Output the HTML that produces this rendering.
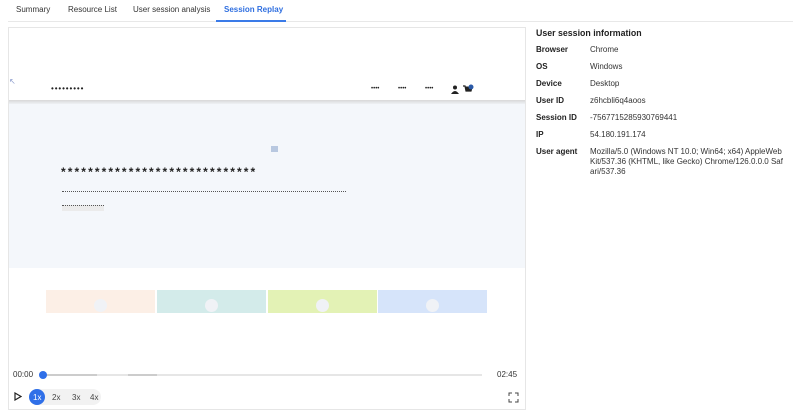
<!DOCTYPE html>
<html><head><style>
*{margin:0;padding:0;box-sizing:border-box}
body{width:800px;height:416px;background:#fff;font-family:"Liberation Sans",sans-serif;position:relative;overflow:hidden;color:#222}
.a{position:absolute}
.tab{position:absolute;top:5px;font-size:8px;color:#333}
.dot{font-size:8px;letter-spacing:0;color:#222}
.lab{position:absolute;left:536px;font-size:8px;font-weight:bold;color:#222}
.val{position:absolute;left:590px;font-size:8px;color:#333;line-height:10px;width:210px;white-space:nowrap}
.blk{position:absolute;top:290px;height:23px;width:109px;overflow:hidden}
.blk i{position:absolute;left:48px;top:9px;width:13px;height:13px;border-radius:50%;background:#f0f2f6}
.sp{position:absolute;top:393px;font-size:8px;color:#444}
</style></head><body>
<div class="tab" style="left:16px">Summary</div>
<div class="tab" style="left:68px">Resource List</div>
<div class="tab" style="left:133px">User session analysis</div>
<div class="tab" style="left:224px;color:#2f6fe0;font-weight:bold">Session Replay</div>
<div class="a" style="left:8px;top:21px;width:785px;height:1px;background:#e8e8e8"></div>
<div class="a" style="left:216px;top:20px;width:70px;height:2px;background:#3b7be8"></div>

<div class="a" style="left:8px;top:27px;width:518px;height:383px;border:1px solid #e6e6e6"></div>
<div class="a" style="left:9px;top:100px;width:516px;height:4px;background:linear-gradient(#d8d8d8,#eef1f5)"></div>
<div class="a" style="left:9px;top:104px;width:516px;height:164px;background:#f4f7fb"></div>
<div class="a" style="left:9px;top:77px;font-size:8px;color:#8899cc">↖</div>
<div class="a dot" style="left:51px;top:84px;letter-spacing:0.9px">•••••••••</div>
<div class="a dot" style="left:371px;top:86px;font-size:6px">••••</div>
<div class="a dot" style="left:398px;top:86px;font-size:6px">••••</div>
<div class="a dot" style="left:425px;top:86px;font-size:6px">••••</div>
<svg class="a" style="left:451px;top:85px" width="8" height="9"><circle cx="4" cy="2.5" r="2" fill="#222"/><path d="M0 9 Q4 3 8 9Z" fill="#222"/></svg>
<svg class="a" style="left:463px;top:84px" width="11" height="10"><path d="M0 2h2l1 5h5l1-4" stroke="#222" fill="#222" stroke-width="1.2"/><circle cx="8" cy="3" r="2.5" fill="#2a5aa8"/></svg>
<div class="a" style="left:271px;top:146px;width:7px;height:6px;background:#b8c8e0"></div>
<div class="a" style="left:61px;top:165px;font-size:12px;font-weight:bold;letter-spacing:2.1px">*****************************</div>
<div class="a" style="left:62px;top:191px;width:284px;border-top:1px dotted #555"></div>
<div class="a" style="left:62px;top:205px;width:42px;height:6px;background:#ebebeb;border-top:1px dotted #555"></div>

<div class="blk" style="left:46px;background:#fcefe6"><i></i></div>
<div class="blk" style="left:157px;background:#d3ebea"><i></i></div>
<div class="blk" style="left:268px;background:#e3f2b5"><i></i></div>
<div class="blk" style="left:378px;background:#d6e4fa"><i></i></div>

<div class="a" style="left:13px;top:370px;font-size:8px;color:#333">00:00</div>
<div class="a" style="left:497px;top:370px;font-size:8px;color:#333">02:45</div>
<div class="a" style="left:42px;top:374px;width:440px;height:2px;background:#e6e6e6"></div>
<div class="a" style="left:42px;top:374px;width:55px;height:2px;background:#ccc"></div>
<div class="a" style="left:128px;top:374px;width:29px;height:2px;background:#ccc"></div>
<div class="a" style="left:39px;top:371px;width:8px;height:8px;border-radius:50%;background:#2f6fe8"></div>
<svg class="a" style="left:14px;top:392px" width="8" height="9"><path d="M1 1L7 4.5L1 8Z" fill="none" stroke="#222" stroke-width="1.2"/></svg>
<div class="a" style="left:29px;top:389px;width:72px;height:16px;border-radius:8px;background:#f2f2f2"></div>
<div class="a" style="left:29px;top:389px;width:16px;height:16px;border-radius:50%;background:#2f6fe8"></div>
<div class="sp" style="left:33px;color:#fff">1x</div>
<div class="sp" style="left:52px">2x</div>
<div class="sp" style="left:72px">3x</div>
<div class="sp" style="left:90px">4x</div>
<svg class="a" style="left:508px;top:392px" width="11" height="11"><path d="M1 4V1h3M7 1h3v3M10 7v3H7M4 10H1V7" fill="none" stroke="#444" stroke-width="1"/></svg>

<div class="a" style="left:536px;top:28px;font-size:8.8px;font-weight:bold;color:#222">User session information</div>
<div class="lab" style="top:45px">Browser</div><div class="val" style="top:45px">Chrome</div>
<div class="lab" style="top:62px">OS</div><div class="val" style="top:62px">Windows</div>
<div class="lab" style="top:79px">Device</div><div class="val" style="top:79px">Desktop</div>
<div class="lab" style="top:96px">User ID</div><div class="val" style="top:96px">z6hcbli6q4aoos</div>
<div class="lab" style="top:113px">Session ID</div><div class="val" style="top:113px">-7567715285930769441</div>
<div class="lab" style="top:130px">IP</div><div class="val" style="top:130px">54.180.191.174</div>
<div class="lab" style="top:147px">User agent</div><div class="val" style="top:147px">Mozilla/5.0 (Windows NT 10.0; Win64; x64) AppleWeb<br>Kit/537.36 (KHTML, like Gecko) Chrome/126.0.0.0 Saf<br>ari/537.36</div>
</body></html>
